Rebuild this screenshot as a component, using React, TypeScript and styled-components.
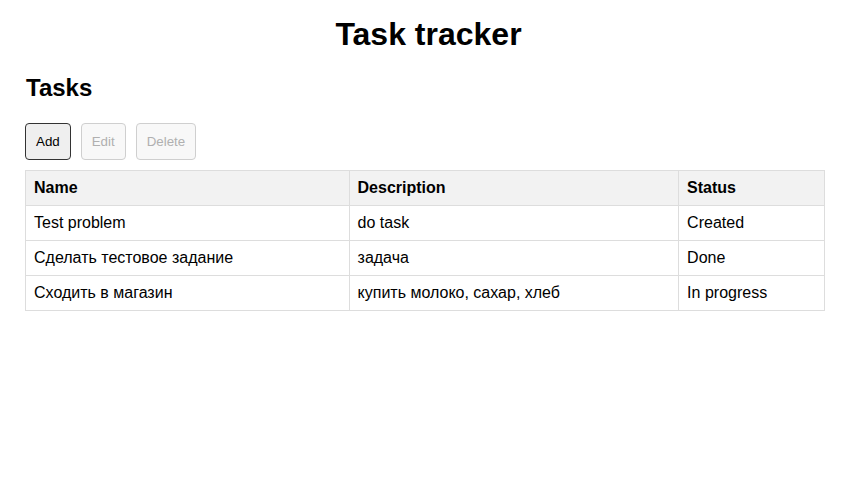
import React from "react";
import styled, { createGlobalStyle } from "styled-components";

const GlobalStyle = createGlobalStyle`
  html, body {
    margin: 0;
    padding: 0;
    background: #ffffff;
    font-family: "Liberation Sans", Arial, sans-serif;
    color: #000000;
  }
`;

const Page = styled.div`
  padding: 0 25px;
`;

const Title = styled.h1`
  margin: 16px 0 0;
  font-size: 32px;
  font-weight: bold;
  text-align: center;
  line-height: 37px;
`;

const SectionTitle = styled.h2`
  margin: 21px 0 0 1px;
  font-size: 24px;
  font-weight: bold;
  line-height: 28px;
`;

const Toolbar = styled.div`
  display: flex;
  gap: 10px;
  margin-top: 21px;
`;

const Button = styled.button`
  font-family: "Liberation Sans", Arial, sans-serif;
  font-size: 13.33px;
  line-height: 15px;
  padding: 10px 10px;
  border-radius: 4px;
  border: 1px solid #333333;
  background: #efefef;
  color: #000000;
  cursor: pointer;

  &:disabled {
    border-color: #cfcfcf;
    background: #f8f8f8;
    color: #b0b0b0;
    cursor: default;
  }
`;

const Table = styled.table`
  margin-top: 10px;
  width: 800px;
  border-collapse: collapse;
  font-size: 16px;
`;

const HeadCell = styled.th<{ $w: number }>`
  width: ${(p) => p.$w}px;
  text-align: left;
  font-weight: bold;
  background: #f2f2f2;
  border: 1px solid #dddddd;
  padding: 8px;
  line-height: 18px;
`;

const Cell = styled.td`
  border: 1px solid #dddddd;
  padding: 8px;
  line-height: 18px;
`;

const tasks = [
  { name: "Test problem", description: "do task", status: "Created" },
  { name: "Сделать тестовое задание", description: "задача", status: "Done" },
  { name: "Сходить в магазин", description: "купить молоко, сахар, хлеб", status: "In progress" },
];

export default function App() {
  return (
    <>
      <GlobalStyle />
      <Page>
        <Title>Task tracker</Title>
        <SectionTitle>Tasks</SectionTitle>
        <Toolbar>
          <Button>Add</Button>
          <Button disabled>Edit</Button>
          <Button disabled>Delete</Button>
        </Toolbar>
        <Table>
          <thead>
            <tr>
              <HeadCell $w={307}>Name</HeadCell>
              <HeadCell $w={313}>Description</HeadCell>
              <HeadCell $w={129}>Status</HeadCell>
            </tr>
          </thead>
          <tbody>
            {tasks.map((t) => (
              <tr key={t.name}>
                <Cell>{t.name}</Cell>
                <Cell>{t.description}</Cell>
                <Cell>{t.status}</Cell>
              </tr>
            ))}
          </tbody>
        </Table>
      </Page>
    </>
  );
}
